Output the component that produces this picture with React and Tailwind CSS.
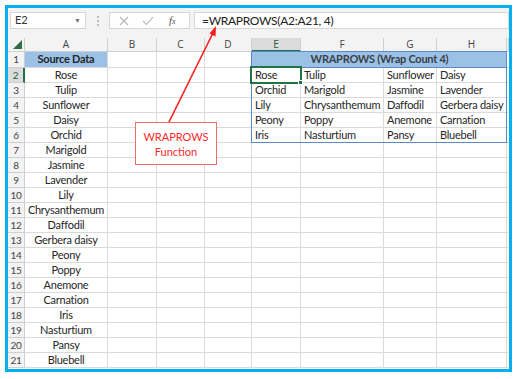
import React from "react";

const source = [
  "Rose", "Tulip", "Sunflower", "Daisy", "Orchid", "Marigold", "Jasmine",
  "Lavender", "Lily", "Chrysanthemum", "Daffodil", "Gerbera daisy", "Peony",
  "Poppy", "Anemone", "Carnation", "Iris", "Nasturtium", "Pansy", "Bluebell",
];

// WRAPROWS(A2:A21, 4)
const wrapped = [];
for (let i = 0; i < source.length; i += 4) wrapped.push(source.slice(i, i + 4));

const letters = ["A", "B", "C", "D", "E", "F", "G", "H", ""];

const cell = "border-r border-b border-[#dadada] h-[15px] leading-[14px] whitespace-nowrap overflow-visible";

const App = () => {
  return (
    <div className="relative w-[521px] h-[379px] bg-white p-[5px]" style={{ fontFamily: "Lato, 'Liberation Sans', sans-serif" }}>
      <div className="w-[507px] h-[367px] border-[3px] border-[#00b0f0] flex flex-col overflow-hidden bg-white">
        {/* Formula bar */}
        <div className="h-[30px] bg-[#f3f3f3] flex items-start pt-[4px] pl-[2px] shrink-0">
          <div className="w-[76px] h-[17px] bg-white border border-[#d6d6d6] flex items-center justify-between px-[4px] text-[11px] text-[#333]">
            <span>E2</span>
            <span className="text-[7px] text-[#777]">▼</span>
          </div>
          <div className="w-[23px] h-[17px] flex flex-col items-center justify-center gap-[2px]">
            <span className="w-[2px] h-[2px] bg-[#bdbdbd]" />
            <span className="w-[2px] h-[2px] bg-[#bdbdbd]" />
            <span className="w-[2px] h-[2px] bg-[#bdbdbd]" />
          </div>
          <div className="w-[81px] h-[17px] bg-white border border-[#d6d6d6] flex items-center pl-[9px] gap-[13px]">
            <svg width="10" height="10" viewBox="0 0 10 10">
              <path d="M1 1 L9 9 M9 1 L1 9" stroke="#b5b5b5" strokeWidth="1.1" />
            </svg>
            <svg width="12" height="10" viewBox="0 0 12 10">
              <path d="M1 5 L4.5 8.5 L11 1" stroke="#b5b5b5" strokeWidth="1.1" fill="none" />
            </svg>
            <span className="text-[11px] italic text-[#555] ml-[2px]" style={{ fontFamily: "'Liberation Serif', serif" }}>
              f<span className="text-[8px]">x</span>
            </span>
          </div>
          <div className="ml-[4px] flex-1 h-[17px] bg-white border border-[#d6d6d6] flex items-center pl-[7px] text-[12px] tracking-[-0.3px] text-[#222]">
            =WRAPROWS(A2:A21, 4)
          </div>
        </div>

        {/* Sheet grid */}
        <div className="relative grid grid-cols-[17px_83px_49px_48px_47px_49px_83px_53px_70px_1fr] text-[11px] tracking-[-0.25px] text-[#262626]">
          {/* column headers */}
          <div className="relative h-[14px] bg-[#f3f3f3] border-r border-b border-[#cfcfcf]">
            <svg className="absolute right-[2px] bottom-[2px]" width="9" height="9" viewBox="0 0 9 9">
              <path d="M9 0 L9 9 L0 9 Z" fill="#2f6f45" />
            </svg>
          </div>
          {letters.map((l, i) =>
            l === "E" ? (
              <div key={i} className="h-[14px] bg-[#dcdcdc] border-r border-[#cfcfcf] border-b-2 border-b-[#217346] flex items-center justify-center text-[10px] tracking-normal text-[#1f5e38]" style={{ fontFamily: "'Open Sans', sans-serif" }}>
                {l}
              </div>
            ) : (
              <div key={i} className="h-[14px] bg-[#f3f3f3] border-r border-b border-[#cfcfcf] flex items-center justify-center text-[10px] tracking-normal text-[#444]" style={{ fontFamily: "'Open Sans', sans-serif" }}>
                {l}
              </div>
            )
          )}

          {/* row 1 */}
          <div className="h-[16px] bg-[#f3f3f3] border-r border-b border-[#cfcfcf] flex items-center justify-center text-[10px] text-[#444]">1</div>
          <div className="h-[16px] bg-[#9bc2e6] border-r border-b border-[#dadada] flex items-center justify-center font-bold">Source Data</div>
          <div className="h-[16px] border-r border-b border-[#dadada]" />
          <div className="h-[16px] border-r border-b border-[#dadada]" />
          <div className="h-[16px] border-r border-b border-[#dadada]" />
          <div className="col-span-4 h-[16px] bg-[#9bc2e6] border-b border-b-[#5a8ac6] flex items-center justify-center font-bold text-[#3a3f48]">
            WRAPROWS (Wrap Count 4)
          </div>
          <div className="h-[16px] border-b border-[#dadada]" />

          {/* rows 2-21 */}
          {source.map((name, r) => {
            const w = wrapped[r] || [];
            return (
              <React.Fragment key={r}>
                {r === 0 ? (
                  <div className="h-[15px] bg-[#dcdcdc] border-b border-[#cfcfcf] border-r-2 border-r-[#217346] flex items-center justify-center text-[10px] text-[#1f5e38]">2</div>
                ) : (
                  <div className="h-[15px] bg-[#f3f3f3] border-r border-b border-[#cfcfcf] flex items-center justify-center text-[10px] text-[#444]">{r + 2}</div>
                )}
                <div className={`${cell} text-center`}>{name}</div>
                <div className={cell} />
                <div className={cell} />
                <div className={cell} />
                <div className={`${cell} pl-[3px]`}>{w[0]}</div>
                <div className={`${cell} pl-[3px]`}>{w[1]}</div>
                <div className={`${cell} pl-[3px]`}>{w[2]}</div>
                <div className={`${cell} pl-[3px]`}>{w[3]}</div>
                <div className="h-[15px] border-b border-[#dadada]" />
              </React.Fragment>
            );
          })}

          {/* table outline */}
          <div className="absolute left-[243px] top-[13px] w-[256px] h-[92px] border border-[#5a8ac6] pointer-events-none" />
          {/* active cell E2 */}
          <div className="absolute left-[242px] top-[28px] w-[52px] h-[18px] border-2 border-[#217346] pointer-events-none">
            <span className="absolute -right-[3px] -bottom-[3px] w-[5px] h-[5px] bg-[#217346] border border-white" />
          </div>
        </div>
      </div>

      {/* callout */}
      <svg className="absolute left-0 top-0 pointer-events-none" width="521" height="379">
        <line x1="169" y1="122" x2="213" y2="33" stroke="#ff1a1a" strokeWidth="1.6" />
        <path d="M216 26 L209.5 33.5 L215.5 36.5 Z" fill="#ff1a1a" />
      </svg>
      <div className="absolute left-[135px] top-[122px] w-[82px] h-[43px] bg-white border-[1.5px] border-[#f26b6b] flex flex-col items-center justify-center text-[11px] leading-[15px] text-[#ff2a2a]">
        <span>WRAPROWS</span>
        <span>Function</span>
      </div>
    </div>
  );
};

export default App;
